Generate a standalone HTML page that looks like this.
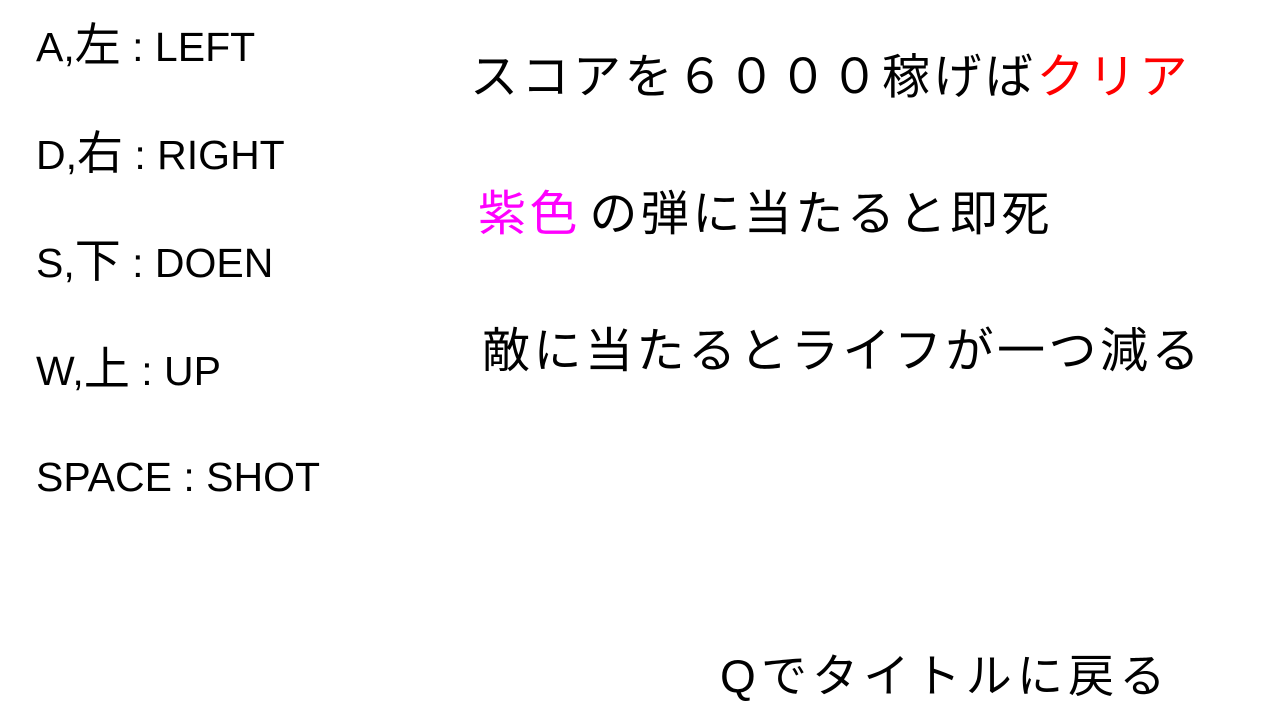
<!DOCTYPE html>
<html><head><meta charset="utf-8"><style>
body{margin:0;width:1280px;height:720px;background:#fff;position:relative;overflow:hidden;font-family:"Liberation Sans","Noto Sans CJK JP",sans-serif;color:#000}
.l{position:absolute;left:36px;font-size:41px;line-height:43px;white-space:nowrap}
.l .k{font-size:46px}
.r{position:absolute;font-size:48px;line-height:52px;letter-spacing:3.5px;white-space:nowrap}
</style></head><body>
<div class="l" style="top:24px">A,<span class="k">左</span> : LEFT</div>
<div class="l" style="top:132px">D,<span class="k">右</span> : RIGHT</div>
<div class="l" style="top:240px">S,<span class="k">下</span> : DOEN</div>
<div class="l" style="top:348px">W,<span class="k">上</span> : UP</div>
<div class="l" style="top:456px">SPACE : SHOT</div>
<div class="r" style="left:470px;top:52px">スコアを６０００稼げば<span style="color:#f00">クリア</span></div>
<div class="r" style="left:478px;top:189px"><span style="color:#f0f">紫色</span><span style="letter-spacing:0;font-size:30px"> </span>の弾に当たると即死</div>
<div class="r" style="left:482px;top:326px">敵に当たるとライフが一つ減る</div>
<div class="r" style="left:720px;top:650px;font-size:46px;letter-spacing:5.2px">Qでタイトルに戻る</div>
</body></html>
